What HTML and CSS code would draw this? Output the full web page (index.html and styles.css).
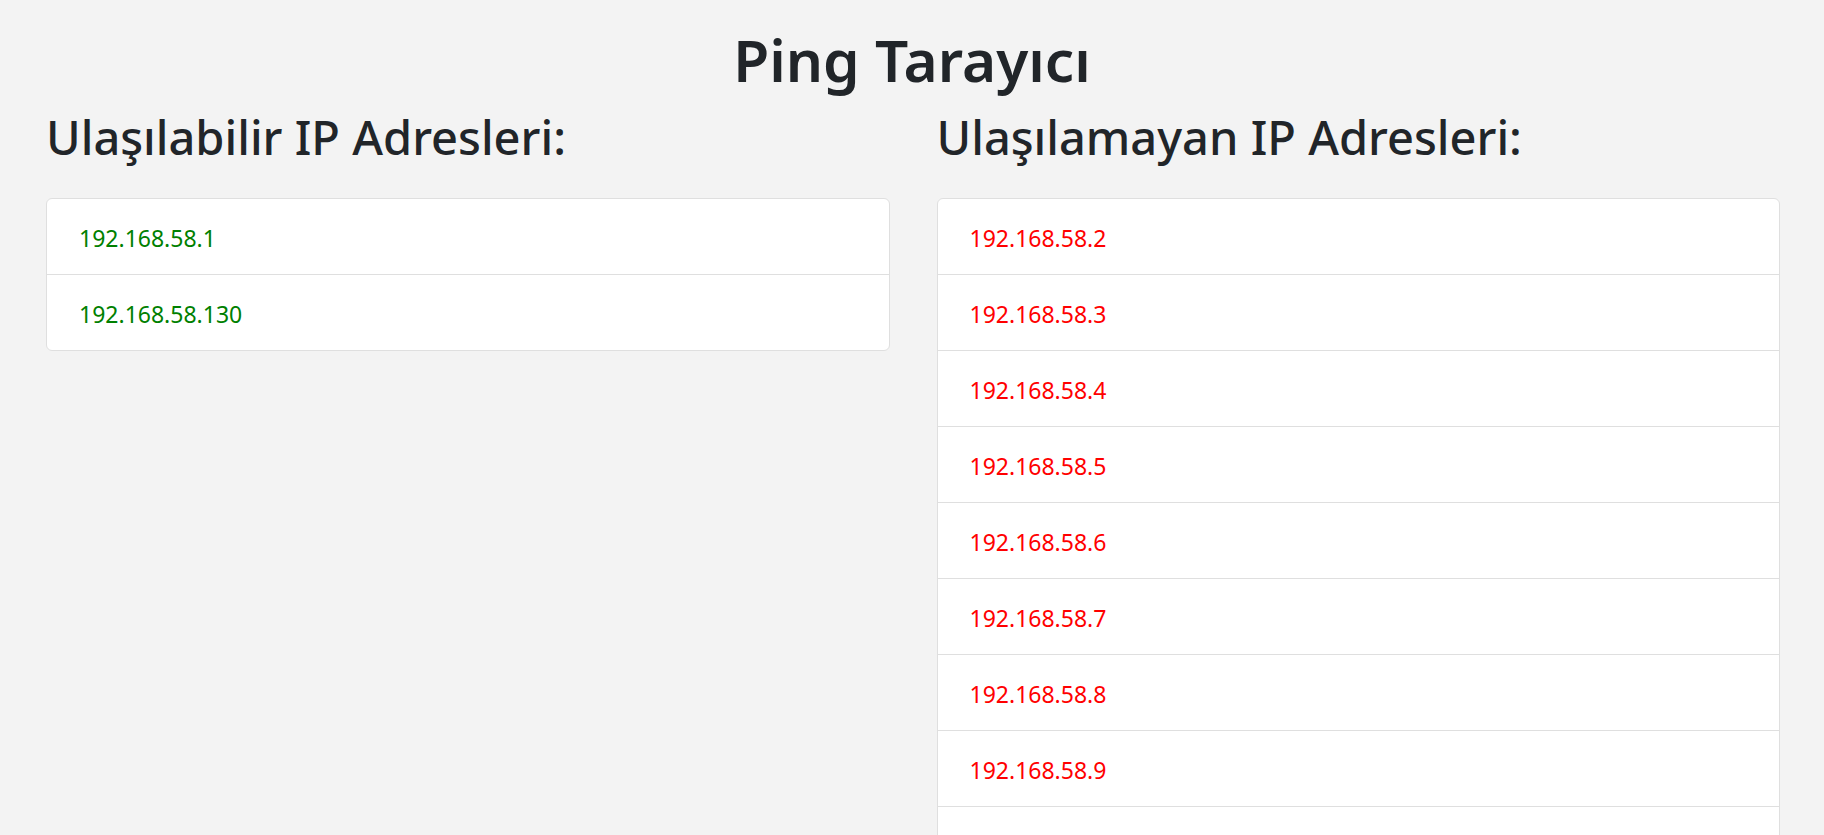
FILE: index.html
```html
<!DOCTYPE html>
<html lang="tr">
<head>
<meta charset="utf-8">
<title>Ping Tarayıcı</title>
<link rel="stylesheet" href="styles.css">
</head>
<body>
<div class="page">
  <h1 class="title">Ping Tarayıcı</h1>
  <div class="columns">
    <section class="column">
      <h2 class="heading">Ulaşılabilir IP Adresleri:</h2>
      <ul class="list">
        <li class="item ok">192.168.58.1</li>
        <li class="item ok">192.168.58.130</li>
      </ul>
    </section>
    <section class="column">
      <h2 class="heading">Ulaşılamayan IP Adresleri:</h2>
      <ul class="list">
        <li class="item fail">192.168.58.2</li>
        <li class="item fail">192.168.58.3</li>
        <li class="item fail">192.168.58.4</li>
        <li class="item fail">192.168.58.5</li>
        <li class="item fail">192.168.58.6</li>
        <li class="item fail">192.168.58.7</li>
        <li class="item fail">192.168.58.8</li>
        <li class="item fail">192.168.58.9</li>
        <li class="item fail">192.168.58.10</li>
        <li class="item fail">192.168.58.11</li>
        <li class="item fail">192.168.58.12</li>
        <li class="item fail">192.168.58.13</li>
      </ul>
    </section>
  </div>
</div>
</body>
</html>
```

FILE: styles.css
```css
html, body {
  margin: 0;
  padding: 0;
  background: #f3f3f3;
}
body {
  font-family: "Noto Sans", "Open Sans", sans-serif;
  color: #212529;
}
.page {
  padding: 0 44px 0 46px;
}
.title {
  margin: 0 -44px 0 -46px;
  padding-top: 23px;
  font-size: 58.5px;
  font-weight: 600;
  line-height: 72px;
  text-align: center;
}
.columns {
  display: grid;
  grid-template-columns: 1fr 1fr;
  column-gap: 47px;
}
.heading {
  margin: 0 0 32px;
  padding-top: 13px;
  font-size: 47px;
  font-weight: 500;
  line-height: 58px;
}
.list {
  list-style: none;
  margin: 0;
  padding: 0;
  background: #fff;
  border: 1px solid #dfdfdf;
  border-radius: 6px;
}
.item {
  padding: 21px 32px 17px;
  font-size: 23px;
  line-height: 37px;
  border-top: 1px solid #dfdfdf;
}
.item:first-child {
  border-top: none;
}
.ok { color: #008000; }
.fail { color: #ff0000; }
```
